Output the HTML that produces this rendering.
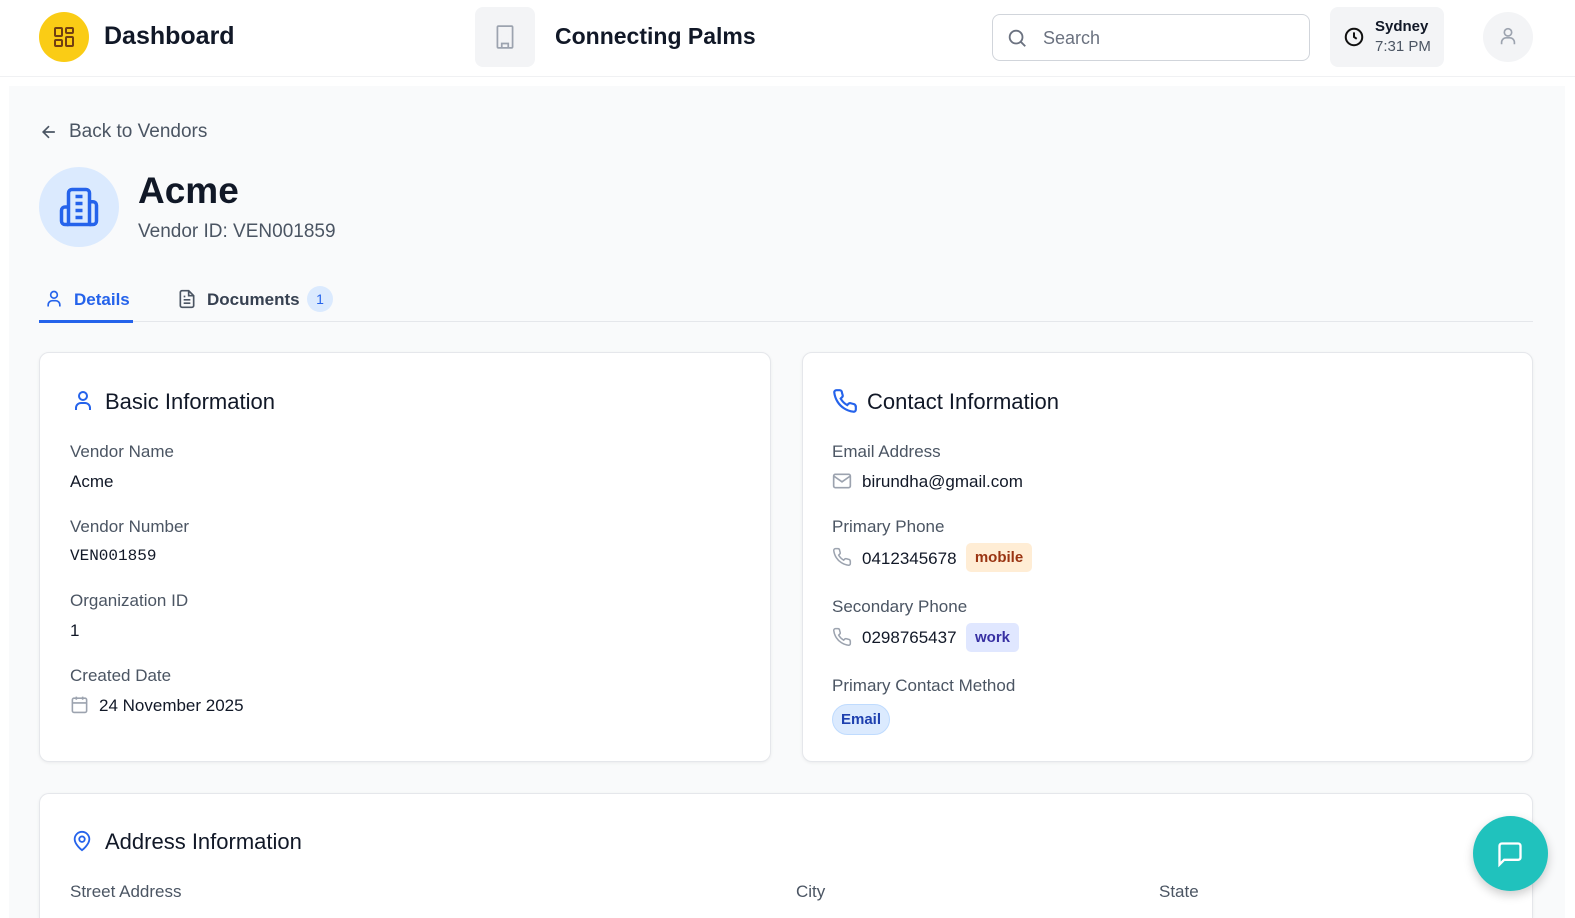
<!DOCTYPE html>
<html style="overflow:hidden;width:1575px;height:918px"><head><meta charset="utf-8"><style>
*{box-sizing:border-box;margin:0;padding:0}
html,body{width:1575px;height:918px;overflow:hidden}
body{background:#fff;font-family:"Liberation Sans",sans-serif;color:#111827;position:relative}
.hdr{position:absolute;left:0;top:0;width:1575px;height:77px;background:#fff;border-bottom:1px solid #f0f1f3}
.main{position:absolute;left:9px;top:86px;width:1556px;height:832px;background:#f9fafb}
.abs{position:absolute}
.card{position:absolute;background:#fff;border:1px solid #e5e7eb;border-radius:10px;box-shadow:0 1px 3px rgba(0,0,0,.06)}
.lbl{position:absolute;font-size:17px;color:#4b5563}
.val{position:absolute;font-size:17px;color:#111827}
.h2{position:absolute;font-size:22px;color:#111827}
svg{position:absolute}
</style></head><body>
<div class="hdr">
 <div class="abs" style="left:39px;top:12px;width:50px;height:50px;border-radius:50%;background:#facc15"></div>
 <svg style="left:52px;top:25px" width="24" height="24" viewBox="0 0 24 24" fill="none" stroke="#713f12" stroke-width="2"><rect x="3" y="3" width="7" height="8" rx="1"/><rect x="14" y="3" width="7" height="5" rx="1"/><rect x="14" y="12" width="7" height="9" rx="1"/><rect x="3" y="15" width="7" height="6" rx="1"/></svg>
 <div class="abs" style="left:104px;top:22px;font-size:25px;font-weight:bold">Dashboard</div>
 <div class="abs" style="left:475px;top:7px;width:60px;height:60px;border-radius:8px;background:#f3f4f6"></div>
 <svg style="left:492px;top:24px" width="26" height="26" viewBox="0 0 24 24" fill="none" stroke="#9ca3af" stroke-width="1.6"><rect x="5" y="2" width="14" height="20" rx="1"/><path d="M9 22v-4h6v4M9 6h.01M15 6h.01M9 10h.01M15 10h.01M9 14h.01M15 14h.01"/></svg>
 <div class="abs" style="left:555px;top:23px;font-size:23px;font-weight:bold">Connecting Palms</div>
 <div class="abs" style="left:992px;top:14px;width:318px;height:47px;border:1px solid #d1d5db;border-radius:8px"></div>
 <svg style="left:1006px;top:27px" width="22" height="22" viewBox="0 0 24 24" fill="none" stroke="#6b7280" stroke-width="2"><circle cx="11" cy="11" r="7"/><path d="M21 21l-5-5"/></svg>
 <div class="abs" style="left:1043px;top:28px;font-size:18px;color:#6b7280">Search</div>
 <div class="abs" style="left:1330px;top:7px;width:114px;height:60px;border-radius:8px;background:#f3f4f6"></div>
 <svg style="left:1343px;top:26px" width="22" height="22" viewBox="0 0 24 24" fill="none" stroke="#111" stroke-width="2.2"><circle cx="12" cy="12" r="9"/><path d="M12 7v5l3 2"/></svg>
 <div class="abs" style="left:1375px;top:18px;font-size:15px;font-weight:bold">Sydney</div>
 <div class="abs" style="left:1375px;top:38px;font-size:15px;color:#4b5563">7:31 PM</div>
 <div class="abs" style="left:1483px;top:12px;width:50px;height:50px;border-radius:50%;background:#f3f4f6"></div>
 <svg style="left:1497px;top:25px" width="22" height="22" viewBox="0 0 24 24" fill="none" stroke="#9ca3af" stroke-width="1.8"><circle cx="12" cy="8" r="4"/><path d="M5 21v-2a5 5 0 015-5h4a5 5 0 015 5v2"/></svg>
</div>
<div class="main"></div>
<svg style="left:39px;top:122px" width="20" height="20" viewBox="0 0 24 24" fill="none" stroke="#4b5563" stroke-width="2"><path d="M19 12H5M12 19l-7-7 7-7"/></svg>
<div class="abs" style="left:69px;top:121px;font-size:19px;color:#4b5563">Back to Vendors</div>
<div class="abs" style="left:39px;top:167px;width:80px;height:80px;border-radius:50%;background:#dbeafe"></div>
<svg style="left:58px;top:186px" width="42" height="42" viewBox="0 0 24 24" fill="none" stroke="#2563eb" stroke-width="2"><path d="M6 22V4a2 2 0 012-2h8a2 2 0 012 2v18z"/><path d="M6 12H4a2 2 0 00-2 2v6a2 2 0 002 2h2M18 9h2a2 2 0 012 2v9a2 2 0 01-2 2h-2M10 6h4M10 10h4M10 14h4M10 18h4"/></svg>
<div class="abs" style="left:138px;top:170px;font-size:37px;font-weight:bold">Acme</div>
<div class="abs" style="left:138px;top:221px;font-size:19px;color:#4b5563">Vendor ID: VEN001859</div>
<svg style="left:44px;top:289px" width="20" height="20" viewBox="0 0 24 24" fill="none" stroke="#2563eb" stroke-width="2"><circle cx="12" cy="7" r="4"/><path d="M5 21v-2a5 5 0 015-5h4a5 5 0 015 5v2"/></svg>
<div class="abs" style="left:74px;top:290px;font-size:17px;color:#2563eb;font-weight:bold">Details</div>
<svg style="left:177px;top:289px" width="20" height="20" viewBox="0 0 24 24" fill="none" stroke="#4b5563" stroke-width="2"><path d="M14 2H6a2 2 0 00-2 2v16a2 2 0 002 2h12a2 2 0 002-2V8z"/><path d="M14 2v6h6M8 13h8M8 17h8M8 9h2"/></svg>
<div class="abs" style="left:207px;top:290px;font-size:17px;color:#374151;font-weight:bold">Documents</div>
<div class="abs" style="left:307px;top:286px;width:26px;height:26px;border-radius:50%;background:#dbeafe;color:#2563eb;font-size:14px;text-align:center;line-height:26px">1</div>
<div class="abs" style="left:39px;top:321px;width:1494px;height:1px;background:#e5e7eb"></div>
<div class="abs" style="left:39px;top:320px;width:94px;height:3px;background:#2563eb"></div>

<div class="card" style="left:39px;top:352px;width:732px;height:410px"></div>
<svg style="left:71px;top:389px" width="24" height="24" viewBox="0 0 24 24" fill="none" stroke="#2563eb" stroke-width="2"><circle cx="12" cy="7" r="4"/><path d="M5 21v-2a5 5 0 015-5h4a5 5 0 015 5v2"/></svg>
<div class="h2" style="left:105px;top:389px">Basic Information</div>
<div class="lbl" style="left:70px;top:442px">Vendor Name</div>
<div class="val" style="left:70px;top:472px">Acme</div>
<div class="lbl" style="left:70px;top:517px">Vendor Number</div>
<div class="val" style="left:70px;top:547px;font-family:'Liberation Mono',monospace;font-size:16px">VEN001859</div>
<div class="lbl" style="left:70px;top:591px">Organization ID</div>
<div class="val" style="left:70px;top:621px">1</div>
<div class="lbl" style="left:70px;top:666px">Created Date</div>
<svg style="left:70px;top:695px" width="19" height="19" viewBox="0 0 24 24" fill="none" stroke="#9ca3af" stroke-width="2"><rect x="3" y="4" width="18" height="18" rx="2"/><path d="M16 2v4M8 2v4M3 10h18"/></svg>
<div class="val" style="left:99px;top:696px">24 November 2025</div>

<div class="card" style="left:802px;top:352px;width:731px;height:410px"></div>
<svg style="left:832px;top:388px" width="26" height="26" viewBox="0 0 24 24" fill="none" stroke="#2563eb" stroke-width="2"><path d="M22 16.9v3a2 2 0 01-2.2 2 19.8 19.8 0 01-8.6-3.1 19.5 19.5 0 01-6-6A19.8 19.8 0 012.1 4.2 2 2 0 014.1 2h3a2 2 0 012 1.7c.1.9.4 1.8.7 2.7a2 2 0 01-.5 2.1L8 9.8a16 16 0 006 6l1.3-1.3a2 2 0 012.1-.4c.9.3 1.8.6 2.7.7a2 2 0 011.7 2z"/></svg>
<div class="h2" style="left:867px;top:389px">Contact Information</div>
<div class="lbl" style="left:832px;top:442px">Email Address</div>
<svg style="left:832px;top:471px" width="20" height="20" viewBox="0 0 24 24" fill="none" stroke="#9ca3af" stroke-width="2"><rect x="2" y="4" width="20" height="16" rx="2"/><path d="M22 6l-10 7L2 6"/></svg>
<div class="val" style="left:862px;top:472px">birundha@gmail.com</div>
<div class="lbl" style="left:832px;top:517px">Primary Phone</div>
<svg style="left:832px;top:547px" width="20" height="20" viewBox="0 0 24 24" fill="none" stroke="#9ca3af" stroke-width="1.8"><path d="M22 16.9v3a2 2 0 01-2.2 2 19.8 19.8 0 01-8.6-3.1 19.5 19.5 0 01-6-6A19.8 19.8 0 012.1 4.2 2 2 0 014.1 2h3a2 2 0 012 1.7c.1.9.4 1.8.7 2.7a2 2 0 01-.5 2.1L8 9.8a16 16 0 006 6l1.3-1.3a2 2 0 012.1-.4c.9.3 1.8.6 2.7.7a2 2 0 011.7 2z"/></svg>
<div class="val" style="left:862px;top:549px">0412345678</div>
<div class="abs" style="left:966px;top:543px;width:66px;height:29px;border-radius:5px;background:#ffedd5;color:#9a3412;font-size:15px;font-weight:bold;text-align:center;line-height:29px">mobile</div>
<div class="lbl" style="left:832px;top:597px">Secondary Phone</div>
<svg style="left:832px;top:627px" width="20" height="20" viewBox="0 0 24 24" fill="none" stroke="#9ca3af" stroke-width="1.8"><path d="M22 16.9v3a2 2 0 01-2.2 2 19.8 19.8 0 01-8.6-3.1 19.5 19.5 0 01-6-6A19.8 19.8 0 012.1 4.2 2 2 0 014.1 2h3a2 2 0 012 1.7c.1.9.4 1.8.7 2.7a2 2 0 01-.5 2.1L8 9.8a16 16 0 006 6l1.3-1.3a2 2 0 012.1-.4c.9.3 1.8.6 2.7.7a2 2 0 011.7 2z"/></svg>
<div class="val" style="left:862px;top:628px">0298765437</div>
<div class="abs" style="left:966px;top:623px;width:53px;height:29px;border-radius:5px;background:#e0e7ff;color:#3730a3;font-size:15px;font-weight:bold;text-align:center;line-height:29px">work</div>
<div class="lbl" style="left:832px;top:676px">Primary Contact Method</div>
<div class="abs" style="left:832px;top:704px;width:58px;height:31px;border-radius:16px;background:#dbeafe;border:1px solid #bfdbfe;color:#1e40af;font-size:15px;font-weight:bold;text-align:center;line-height:29px">Email</div>

<div class="card" style="left:39px;top:793px;width:1494px;height:125px;border-bottom:none;border-radius:10px 10px 0 0"></div>
<svg style="left:71px;top:829px" width="22" height="24" viewBox="0 0 24 24" fill="none" stroke="#2563eb" stroke-width="2"><path d="M20 10c0 6-8 12-8 12S4 16 4 10a8 8 0 0116 0z"/><circle cx="12" cy="10" r="3"/></svg>
<div class="h2" style="left:105px;top:829px">Address Information</div>
<div class="lbl" style="left:70px;top:882px">Street Address</div>
<div class="lbl" style="left:796px;top:882px">City</div>
<div class="lbl" style="left:1159px;top:882px">State</div>
<div class="abs" style="left:1473px;top:816px;width:75px;height:75px;border-radius:50%;background:#20c2bd;box-shadow:0 4px 10px rgba(0,0,0,.2)"></div>
<svg style="left:1496px;top:840px" width="28" height="28" viewBox="0 0 24 24" fill="none" stroke="#fff" stroke-width="2"><path d="M21 15a2 2 0 01-2 2H7l-4 4V5a2 2 0 012-2h14a2 2 0 012 2z"/></svg>
</body></html>
